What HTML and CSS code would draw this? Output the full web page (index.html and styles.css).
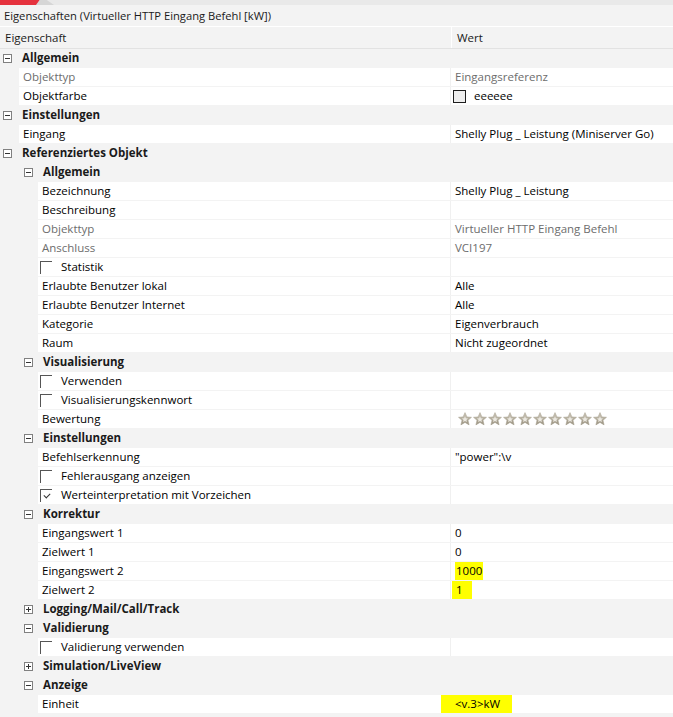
FILE: index.html
```html
<!DOCTYPE html>
<html>
<head>
<meta charset="utf-8">
<link rel="stylesheet" href="styles.css">
</head>
<body>
<div class="topstrip"><div class="tab-red"></div><div class="tab-gray"></div></div>
<div class="title">Eigenschaften (Virtueller HTTP Eingang Befehl [kW])</div>
<div class="header"><div class="hk">Eigenschaft</div><div class="hv">Wert</div></div>
<div class="grid">
  <div class="row cat l1"><span class="tog minus"></span><span class="cname">Allgemein</span></div>
  <div class="row prop l1"><div class="k ro">Objekttyp</div><div class="v ro">Eingangsreferenz</div></div>
  <div class="row prop l1"><div class="k">Objektfarbe</div><div class="v"><span class="swatch"></span>eeeeee</div></div>
  <div class="row cat l1"><span class="tog minus"></span><span class="cname">Einstellungen</span></div>
  <div class="row prop l1"><div class="k">Eingang</div><div class="v">Shelly Plug _ Leistung (Miniserver Go)</div></div>
  <div class="row cat l1"><span class="tog minus"></span><span class="cname">Referenziertes Objekt</span></div>
  <div class="row cat l2"><span class="tog minus"></span><span class="cname">Allgemein</span></div>
  <div class="row prop l2"><div class="k">Bezeichnung</div><div class="v">Shelly Plug _ Leistung</div></div>
  <div class="row prop l2"><div class="k">Beschreibung</div><div class="v"></div></div>
  <div class="row prop l2"><div class="k ro">Objekttyp</div><div class="v ro">Virtueller HTTP Eingang Befehl</div></div>
  <div class="row prop l2"><div class="k ro">Anschluss</div><div class="v ro">VCI197</div></div>
  <div class="row prop l2"><div class="k"><span class="cb"></span>Statistik</div><div class="v"></div></div>
  <div class="row prop l2"><div class="k">Erlaubte Benutzer lokal</div><div class="v">Alle</div></div>
  <div class="row prop l2"><div class="k">Erlaubte Benutzer Internet</div><div class="v">Alle</div></div>
  <div class="row prop l2"><div class="k">Kategorie</div><div class="v">Eigenverbrauch</div></div>
  <div class="row prop l2"><div class="k">Raum</div><div class="v">Nicht zugeordnet</div></div>
  <div class="row cat l2"><span class="tog minus"></span><span class="cname">Visualisierung</span></div>
  <div class="row prop l2"><div class="k"><span class="cb"></span>Verwenden</div><div class="v"></div></div>
  <div class="row prop l2"><div class="k"><span class="cb"></span>Visualisierungskennwort</div><div class="v"></div></div>
  <div class="row prop l2"><div class="k">Bewertung</div><div class="v stars">
    <svg width="150" height="14" viewBox="0 0 150 14">
      <defs>
        <linearGradient id="sg" x1="0" y1="0" x2="0" y2="1">
          <stop offset="0" stop-color="#cfc9ba"/>
          <stop offset="1" stop-color="#9a9382"/>
        </linearGradient>
        <g id="st">
          <path d="M7 0.6 L8.9 4.9 L13.5 5.3 L10 8.3 L11.1 12.9 L7 10.4 L2.9 12.9 L4 8.3 L0.5 5.3 L5.1 4.9 Z" fill="url(#sg)" stroke="#a39c8b" stroke-width="0.5"/>
          <path d="M7 4.2 L7.9 6.3 L10.1 6.5 L8.4 7.9 L9 10.1 L7 8.9 L5 10.1 L5.6 7.9 L3.9 6.5 L6.1 6.3 Z" fill="#ebe8e0"/>
        </g>
      </defs>
      <use href="#st" x="0"/><use href="#st" x="15"/><use href="#st" x="30"/><use href="#st" x="45"/><use href="#st" x="60"/>
      <use href="#st" x="75"/><use href="#st" x="90"/><use href="#st" x="105"/><use href="#st" x="120"/><use href="#st" x="135"/>
    </svg>
  </div></div>
  <div class="row cat l2"><span class="tog minus"></span><span class="cname">Einstellungen</span></div>
  <div class="row prop l2"><div class="k">Befehlserkennung</div><div class="v">"power":\v</div></div>
  <div class="row prop l2"><div class="k"><span class="cb"></span>Fehlerausgang anzeigen</div><div class="v"></div></div>
  <div class="row prop l2"><div class="k"><span class="cb checked"></span>Werteinterpretation mit Vorzeichen</div><div class="v"></div></div>
  <div class="row cat l2"><span class="tog minus"></span><span class="cname">Korrektur</span></div>
  <div class="row prop l2"><div class="k">Eingangswert 1</div><div class="v">0</div></div>
  <div class="row prop l2"><div class="k">Zielwert 1</div><div class="v">0</div></div>
  <div class="row prop l2"><div class="k">Eingangswert 2</div><div class="v"><span class="hl">1000</span></div></div>
  <div class="row prop l2"><div class="k">Zielwert 2</div><div class="v"><span class="hl hl-one">1</span></div></div>
  <div class="row cat l2"><span class="tog plus"></span><span class="cname">Logging/Mail/Call/Track</span></div>
  <div class="row cat l2"><span class="tog minus"></span><span class="cname">Validierung</span></div>
  <div class="row prop l2"><div class="k"><span class="cb"></span>Validierung verwenden</div><div class="v"></div></div>
  <div class="row cat l2"><span class="tog plus"></span><span class="cname">Simulation/LiveView</span></div>
  <div class="row cat l2"><span class="tog minus"></span><span class="cname">Anzeige</span></div>
  <div class="row prop l2"><div class="k">Einheit</div><div class="v"><span class="hl hl-unit">&lt;v.3&gt;kW</span></div></div>
</div>
</body>
</html>
```
FILE: styles.css
```css
html, body {
  margin: 0;
  padding: 0;
}
body {
  width: 673px;
  height: 717px;
  overflow: hidden;
  background: #f3f3f3;
  font-family: "Open Sans", "Noto Sans", sans-serif;
  font-size: 11.5px;
  color: #000;
}
.topstrip {
  height: 5px;
  background: #e9e9e9;
  position: relative;
  overflow: hidden;
}
.tab-red {
  position: absolute;
  left: 0;
  top: 0;
  width: 40px;
  height: 5px;
  background: #e5323e;
  clip-path: polygon(0 0, 100% 0, 92% 100%, 0 100%);
}
.tab-gray {
  position: absolute;
  left: 36px;
  top: 0;
  width: 18px;
  height: 5px;
  background: #d6d6d6;
  clip-path: polygon(20% 0, 60% 0, 100% 100%, 0 100%);
}
.title {
  height: 21px;
  line-height: 21px;
  padding-left: 4px;
  background: #f3f3f3;
  color: #1a1a1a;
  font-size: 11.2px;
}
.header {
  display: flex;
  height: 21px;
  line-height: 21px;
  border-top: 1px solid #ffffff;
  border-bottom: 1px solid #e2e2e2;
  background: #f3f3f3;
  color: #1a1a1a;
}
.hk {
  width: 446px;
  padding-left: 5px;
  border-right: 1px solid #ffffff;
}
.hv {
  padding-left: 5px;
}
.grid {
  display: flex;
  flex-direction: column;
}
.row {
  height: 18px;
  border-bottom: 1px solid #f3f3f3;
  display: flex;
  align-items: center;
  line-height: 18px;
  white-space: nowrap;
}
.row.cat {
  background: #f3f3f3;
  font-weight: bold;
  color: #1a1a1a;
}
.row.cat.l1 {
  padding-left: 3px;
}
.row.cat.l2 {
  padding-left: 24px;
}
.cname {
  margin-left: 10px;
}
.tog {
  width: 9px;
  height: 9px;
  box-sizing: border-box;
  border: 1px solid #808080;
  position: relative;
  flex: none;
  background: #ffffff;
}
.tog::before {
  content: "";
  position: absolute;
  left: 1px;
  top: 3px;
  width: 5px;
  height: 1px;
  background: #333;
}
.tog.plus::after {
  content: "";
  position: absolute;
  left: 3px;
  top: 1px;
  width: 1px;
  height: 5px;
  background: #333;
}
.row.prop {
  background: #f3f3f3;
}
.row.prop.l1 {
  padding-left: 19px;
}
.row.prop.l2 {
  padding-left: 38px;
}
.k {
  background: #ffffff;
  height: 18px;
  display: flex;
  align-items: center;
  padding-left: 4px;
  box-sizing: border-box;
  border-right: 1px solid #f0f0f0;
}
.l1 .k { width: 432px; }
.l2 .k { width: 413px; }
.v {
  flex: 1;
  background: #ffffff;
  height: 18px;
  display: flex;
  align-items: center;
  padding-left: 4px;
}
.ro {
  color: #6d6d6d;
}
.swatch {
  width: 13px;
  height: 13px;
  box-sizing: border-box;
  border: 1px solid #1e1e1e;
  background: #eeeeee;
  margin-left: -2px;
  margin-right: 8px;
}
.cb {
  width: 12px;
  height: 13px;
  box-sizing: border-box;
  border-left: 1px solid #555;
  border-top: 1px solid #555;
  margin-left: -2px;
  margin-right: 9px;
  position: relative;
  flex: none;
}
.cb.checked::after {
  content: "";
  position: absolute;
  left: 3px;
  top: 3px;
  width: 5px;
  height: 3px;
  border-left: 1px solid #333;
  border-bottom: 1px solid #333;
  transform: rotate(-45deg);
}
.stars {
  padding-left: 7px;
}
.stars svg {
  display: block;
}
.hl {
  background: #ffff00;
  padding: 0 1px;
  line-height: 18px;
}
.hl-one {
  padding: 0 9px 0 4px;
  margin-left: -3px;
}
.hl-unit {
  padding: 0 12px 0 14px;
  margin-left: -14px;
}
```
